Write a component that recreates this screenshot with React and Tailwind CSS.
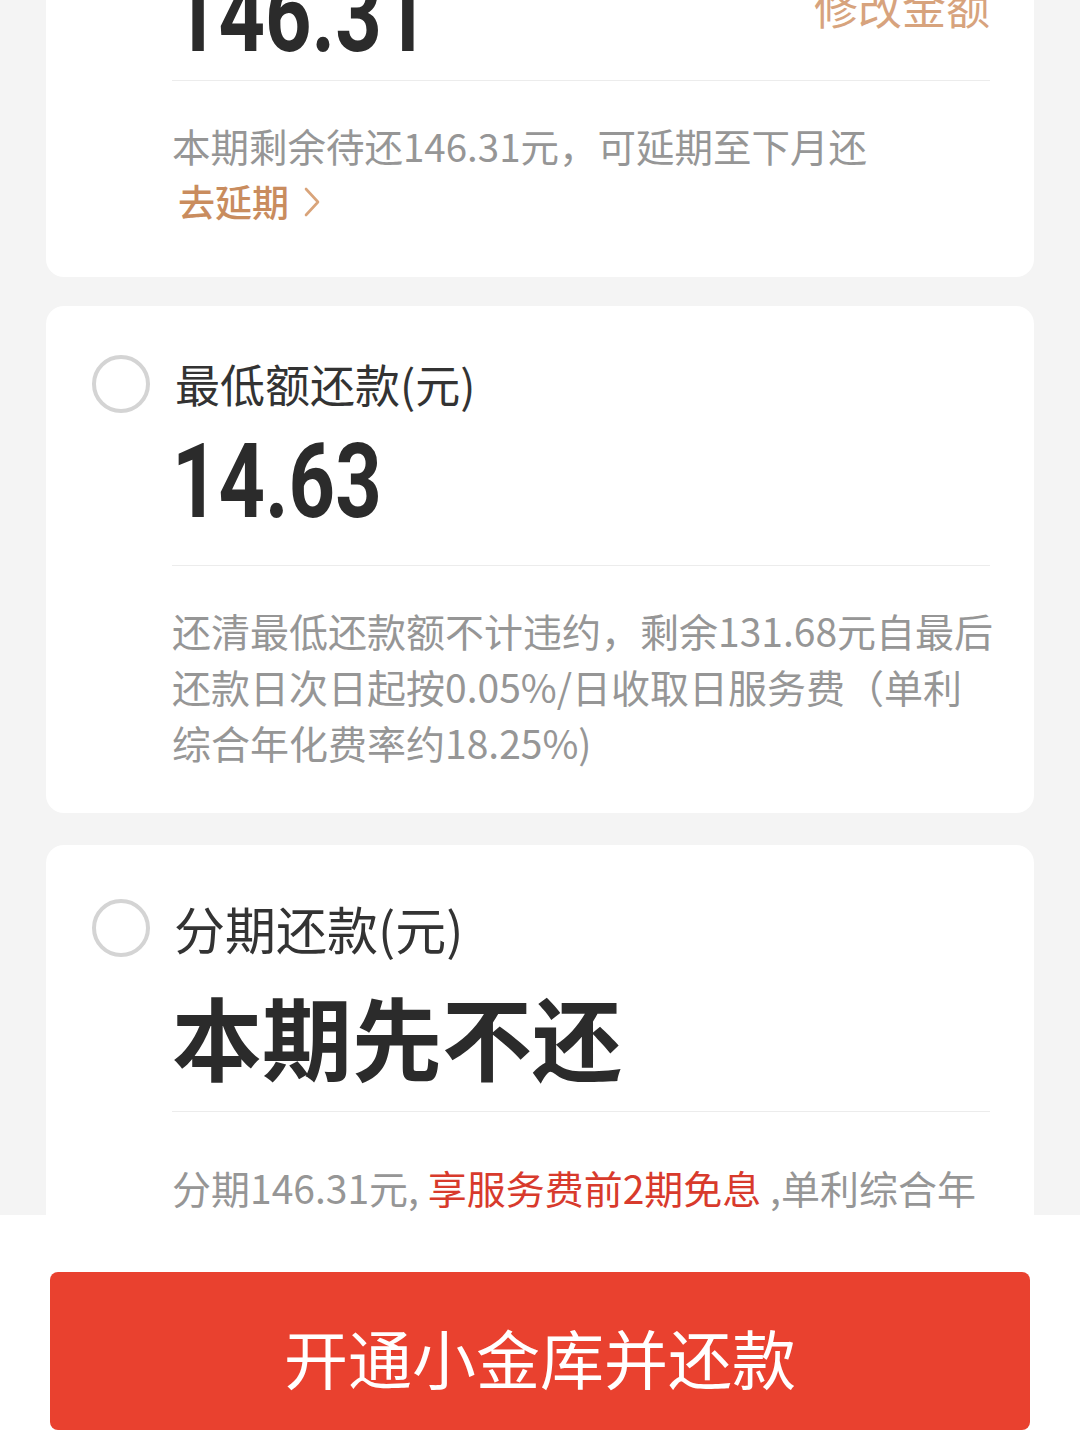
import React from "react";

const CJK = { fontFamily: '"Noto Sans CJK SC", "Noto Sans", sans-serif' };
const NUM = { fontFamily: 'Roboto, "Noto Sans CJK SC", sans-serif' };

function Radio() {
  return (
    <div className="w-[58px] h-[58px] rounded-full border-[4px] border-[#d4d4d4] shrink-0" />
  );
}

function BigNumber({ children }) {
  return (
    <div
      className="text-[104px] leading-[104px] font-bold text-[#2b2b2b] origin-left scale-x-[0.78] tracking-[0px]"
      style={NUM}
    >
      {children}
    </div>
  );
}

export default function App() {
  return (
    <div className="relative w-[1080px] h-[1439px] overflow-hidden bg-[#f4f4f4]" style={CJK}>
      <div className="flex flex-col px-[46px]">
        {/* Card 1 */}
        <div className="mt-[-120px] bg-white rounded-[18px] pl-[126px] pr-[44px] pt-[84px] pb-[48px]">
          <div className="flex justify-between items-start">
            <BigNumber>146.31</BigNumber>
            <div className="mt-[20px] text-[44px] leading-[44px] text-[#d7a37d]">修改金额</div>
          </div>
          <div className="mt-[12px] h-px bg-[#ececec]" />
          <div className="mt-[36px] text-[38.5px] leading-[56px] text-[#969696]">
            本期剩余待还146.31元，可延期至下月还
          </div>
          <div className="flex items-center text-[37px] leading-[56px] font-medium text-[#c98c5e] pl-[6px]">
            去延期
            <svg className="ml-[14px] mt-[2px]" width="18" height="32" viewBox="0 0 18 32" fill="none">
              <path d="M3 3 L15 16 L3 29" stroke="#d9a47a" strokeWidth="2.6" strokeLinecap="round" strokeLinejoin="round" />
            </svg>
          </div>
        </div>

        {/* Card 2 */}
        <div className="mt-[29px] bg-white rounded-[18px] pl-[46px] pr-[44px] pt-[48px] pb-[43px]">
          <div className="flex items-center h-[60px]">
            <Radio />
            <div className="ml-[25px] text-[45px] leading-[60px] text-[#333333]">最低额还款(元)</div>
          </div>
          <div className="pl-[80px]">
            <div className="mt-[16px]">
              <BigNumber>14.63</BigNumber>
            </div>
            <div className="mt-[31px] h-px bg-[#ececec]" />
            <div className="mt-[36px] text-[39px] leading-[56px] text-[#969696] whitespace-nowrap">
              <div>还清最低还款额不计违约，剩余131.68元自最后</div>
              <div>还款日次日起按0.05%/日收取日服务费（单利</div>
              <div>综合年化费率约18.25%)</div>
            </div>
          </div>
        </div>

        {/* Card 3 */}
        <div className="mt-[32px] bg-white rounded-[18px] pl-[46px] pr-[44px] pt-[53px] pb-[120px]">
          <div className="flex items-center h-[60px]">
            <Radio />
            <div className="ml-[24px] text-[51px] leading-[60px] text-[#333333]">分期还款(元)</div>
          </div>
          <div className="pl-[80px]">
            <div className="mt-[27px] text-[90px] leading-[100px] font-bold text-[#2b2b2b]">本期先不还</div>
            <div className="mt-[26px] h-px bg-[#ececec]" />
            <div className="mt-[47px] text-[39px] leading-[56px] text-[#969696] whitespace-nowrap">
              分期146.31元, <span className="text-[#d83a2c]">享服务费前2期免息</span> ,单利综合年
            </div>
          </div>
        </div>
      </div>

      {/* Bottom bar */}
      <div className="absolute left-0 right-0 bottom-0 h-[224px] bg-white px-[50px] pt-[57px]">
        <div className="h-[158px] rounded-[8px] bg-[#e9412f] flex items-center justify-center">
          <span className="text-white text-[64px] leading-none mt-[10px]">开通小金库并还款</span>
        </div>
      </div>
    </div>
  );
}
